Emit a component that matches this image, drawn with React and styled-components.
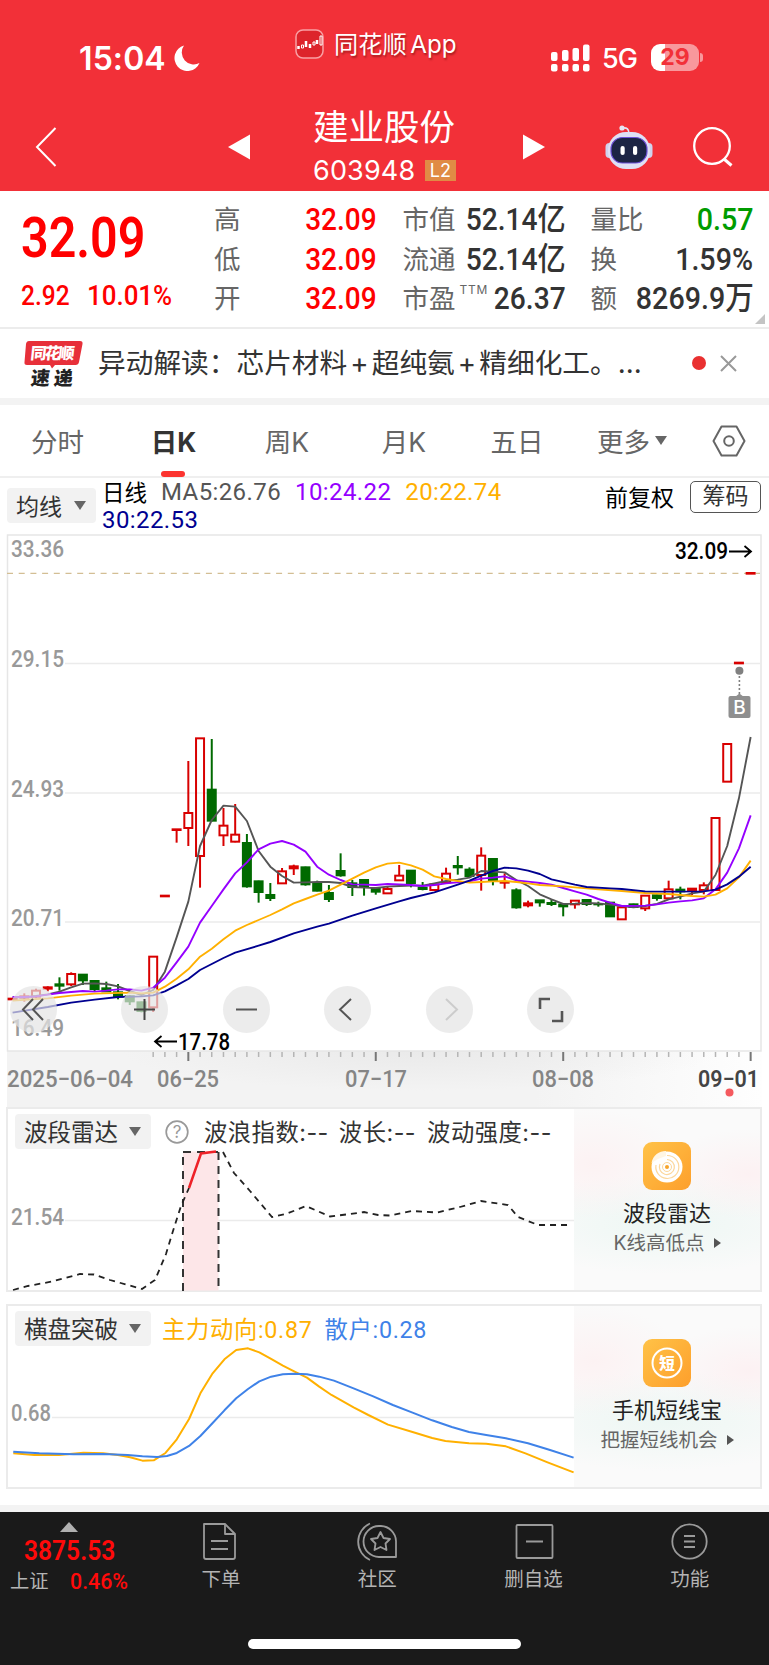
import styled, { createGlobalStyle } from 'styled-components';

const GlobalStyle = createGlobalStyle`
  * {
    box-sizing: border-box;
  }
  body {
    margin: 0;
    background: #ffffff;
    font-family: Inter, 'Noto Sans CJK SC', sans-serif;
    color: #333333;
  }
`;

const Page = styled.div`
  width: 769px;
  height: 1665px;
  overflow: hidden;
  display: flex;
  flex-direction: column;
`;

// Condensed figures used for every quote
const Num = styled.span`
  display: inline-block;
  font-family: Roboto, 'Noto Sans CJK SC', sans-serif;
  font-weight: ${(props) => props.$weight || 500};
  transform: scaleX(${(props) => props.$squeeze || 0.875});
  transform-origin: ${(props) => props.$origin || 'left'} center;
  white-space: nowrap;
`;

const Caret = styled.i`
  width: 0;
  height: 0;
  border: 6px solid transparent;
  border-bottom-width: 0;
  border-top: 9px solid #666666;
`;

/* ---------- header ---------- */

const Header = styled.header`
  height: 191px;
  background: #f23038;
  color: #ffffff;
`;

const StatusBar = styled.div`
  height: 92px;
  padding: 23px 70px 0 79px;
  display: grid;
  grid-template-columns: 216px 1fr auto;
`;

const Clock = styled.div`
  display: flex;
  align-items: center;
  height: 70px;
  gap: 8px;
  font-size: 32px;
  font-weight: 600;
  letter-spacing: 0.1px;
`;

const AppTag = styled.div`
  display: flex;
  align-items: center;
  gap: 10px;
  height: 41px;
  font-size: 24.2px;
  word-spacing: -3px;
  text-shadow: 1px 2px 2px rgba(80, 0, 0, 0.45);

  span {
    padding-bottom: 2px;
  }
`;

const Signals = styled.div`
  display: flex;
  align-items: center;
  height: 69px;
  font-size: 27px;
  font-weight: 500;
`;

const Network = styled.span`
  width: 37px;
  margin: 2px 12px 0 12px;
  letter-spacing: -1px;
`;

const Battery = styled.span`
  position: relative;
  width: 48px;
  height: 27px;
  border-radius: 9px;
  background: linear-gradient(90deg, #ffffff 30%, #f8989c 30%);
  color: #f23038;
  font-size: 23px;
  font-weight: 700;
  line-height: 27px;
  text-align: center;

  &::after {
    content: '';
    position: absolute;
    right: -4px;
    top: 9px;
    width: 3px;
    height: 9px;
    border-radius: 0 3px 3px 0;
    background: #f8989c;
  }
`;

const TitleBar = styled.div`
  height: 99px;
  padding: 10px 35px 0;
  display: flex;
  align-items: center;
`;

const BackIcon = styled.svg`
  margin-right: 171px;
`;

const StockName = styled.div`
  width: 143px;
  margin: 0 67px 0 63px;
  white-space: nowrap;
`;

const Name = styled.div`
  height: 46px;
  font-size: 35.5px;
  line-height: 48px;
`;

const Code = styled.div`
  display: flex;
  align-items: center;
  justify-content: space-between;
  height: 40px;
  padding-top: 1px;
  font-size: 27px;
  letter-spacing: 0.15px;
`;

const Badge = styled.span`
  width: 31px;
  height: 21px;
  background: #e08b45;
  font-size: 18px;
  line-height: 22px;
  text-align: center;
`;

const HeaderTools = styled.div`
  display: flex;
  align-items: center;
  gap: 40px;
  margin-left: 60px;
`;

/* ---------- quote ---------- */

const Quote = styled.section`
  position: relative;
  height: 138px;
  padding: 9px 15px 0 21px;
  display: grid;
  grid-template-columns: 193px 163px 163px 163px;
  border-bottom: 2px solid #ececec;

  &::after {
    content: '';
    position: absolute;
    right: 4px;
    bottom: 3px;
    border-left: 10px solid transparent;
    border-bottom: 10px solid #c4c4c4;
  }
`;

const PriceBlock = styled.div`
  color: #ff0000;
`;

const Price = styled.div`
  height: 72px;
  font-size: 55px;
  line-height: 74px;
`;

const Change = styled.div`
  display: flex;
  font-size: 28px;
  line-height: 48px;
  height: 48px;

  span:first-child {
    width: 66px;
  }
`;

const StatColumn = styled.div`
  margin-left: ${(props) => props.$shift || 0}px;
  width: 163px;
`;

const Stat = styled.div`
  display: flex;
  justify-content: space-between;
  height: 39.5px;
  line-height: 39.5px;
  font-size: 26.5px;
  color: #666666;
  white-space: nowrap;

  ${Num} {
    margin-left: -16px;
    font-size: 32px;
    color: ${(props) => props.$color || '#333333'};
  }

  sup {
    display: inline-block;
    width: 0;
    margin-left: 4px;
    font-size: 12px;
    line-height: 12px;
    letter-spacing: 0.8px;
    vertical-align: 14px;
  }
`;

/* ---------- news strip ---------- */

const News = styled.div`
  height: 69px;
  padding: 0 30px 0 24px;
  display: flex;
  align-items: center;
`;

const Headline = styled.div`
  width: 594px;
  margin-left: 15px;
  flex: none;
  font-size: 27.7px;
  line-height: 40px;
  white-space: nowrap;
  padding-bottom: 1px;

  b {
    display: inline-block;
    width: 24.5px;
    font-weight: 400;
    text-align: center;
  }
`;

const RedDot = styled.i`
  width: 14px;
  height: 14px;
  margin-right: 14px;
  margin-top: -1px;
  flex: none;
  border-radius: 50%;
  background: #e93030;
`;

const Band = styled.div`
  height: 7px;
  background: #f3f3f3;
`;

/* ---------- tabs ---------- */

const Tabs = styled.nav`
  height: 73px;
  display: flex;
  border-bottom: 2px solid #efefef;
`;

const Tab = styled.div`
  position: relative;
  width: ${(props) => props.$width}px;
  flex: none;
  display: flex;
  align-items: center;
  justify-content: center;
  gap: 5px;
  font-size: 26.5px;
  font-weight: ${(props) => (props.$active ? 700 : 400)};
  color: ${(props) => (props.$active ? '#333333' : '#666666')};
  white-space: nowrap;

  &::after {
    content: '';
    display: ${(props) => (props.$active ? 'block' : 'none')};
    position: absolute;
    bottom: -1px;
    left: calc(50% - 13px);
    width: 24px;
    height: 6px;
    border-radius: 3px;
    background: #fc3430;
  }
`;

/* ---------- indicators ---------- */

const Indicators = styled.div`
  height: 55px;
  padding: 1px 7px 0;
  display: flex;
  white-space: nowrap;
`;

const Picker = styled.div`
  width: ${(props) => props.$width}px;
  height: 35px;
  margin-top: ${(props) => props.$drop || 0}px;
  padding: 0 10px 1px 9px;
  display: flex;
  align-items: center;
  justify-content: space-between;
  flex: none;
  border-radius: 4px;
  background: #f2f2f2;
  font-size: ${(props) => props.$size || 23}px;
`;

const MaList = styled.div`
  width: 440px;
  margin-left: 6px;
  display: flex;
  flex-wrap: wrap;
  align-content: flex-start;
  column-gap: 14px;
  font-size: 22.5px;
  line-height: 27.5px;
  color: #000000;
`;

const Ma = styled.span`
  color: ${(props) => props.$color};
  font-family: Roboto, sans-serif;
  font-size: 24px;
  letter-spacing: 0.4px;
`;

const Adjust = styled.div`
  margin: 1px 16px 0 63px;
  font-size: 23px;
  line-height: 36px;
  color: #000000;
`;

const ChipsButton = styled.div`
  width: 71px;
  height: 32px;
  margin-top: 2px;
  border: 1.5px solid #555555;
  border-radius: 5px;
  font-size: 23px;
  line-height: 28px;
  text-align: center;
`;

/* ---------- charts ---------- */

const ChartArea = styled.div`
  position: relative;
  height: 574px;

  & > svg {
    display: block;
  }
`;

const Controls = styled.div`
  position: absolute;
  left: 10px;
  top: 453px;
  display: flex;
  gap: 54.6px;
`;

const RoundButton = styled.button`
  width: 47px;
  height: 47px;
  padding: 0;
  border: 0;
  border-radius: 50%;
  background: rgba(228, 228, 228, 0.7);

  &:first-child {
    margin-right: 9.5px;
  }
`;

const Panel = styled.section`
  position: relative;
  height: 185px;
  margin: 0 7px 12px 6px;
  border: 2px solid #ebebeb;
  display: grid;
  grid-template-columns: 566px 1fr;
`;

const PanelChart = styled.div`
  position: relative;

  svg.plot {
    display: block;
    overflow: visible;
  }
`;

const Legend = styled.div`
  position: absolute;
  left: 7px;
  top: 5px;
  display: flex;
  align-items: center;
  font-size: 23px;
  white-space: nowrap;
`;

const HelpIcon = styled.svg`
  margin-left: 13px;
`;

const LegendItem = styled.span`
  margin-left: ${(props) => props.$gap}px;
  margin-top: -1px;
  color: ${(props) => props.$color || '#333333'};
  font-family: ${(props) => (props.$figures ? 'Roboto' : 'Inter')}, 'Noto Sans CJK SC', sans-serif;
  font-size: 23.3px;
  letter-spacing: ${(props) => (props.$figures ? 0.7 : 0.5)}px;
`;

const Promo = styled.aside`
  display: flex;
  flex-direction: column;
  align-items: center;
  padding-top: 33px;
  background:
    radial-gradient(ellipse 90px 55px at 20px 55px, rgba(255, 234, 236, 0.5), transparent),
    radial-gradient(ellipse 90px 45px at 175px 65px, rgba(255, 232, 235, 0.5), transparent),
    radial-gradient(ellipse 170px 50px at 90px 115px, rgba(234, 246, 242, 0.8), transparent),
    #fafafa;
`;

const PromoName = styled.div`
  margin-top: 7px;
  font-size: 22px;
  line-height: 33px;
  color: #222222;
`;

const PromoHint = styled.div`
  display: flex;
  align-items: center;
  gap: 9px;
  font-size: 19.5px;
  line-height: 26px;
  color: #666666;

  &::after {
    content: '';
    border: 5.5px solid transparent;
    border-right-width: 0;
    border-left: 7px solid #555555;
  }
`;

/* ---------- bottom bar ---------- */

const Spacer = styled.div`
  height: 4px;
`;

const BottomBar = styled.footer`
  height: 153px;
  background: #1a1a1a;
  color: #b4b4b4;
`;

const NavRow = styled.div`
  height: 127px;
  display: grid;
  grid-template-columns: 143px repeat(4, 156.25px);
`;

const IndexCell = styled.div`
  padding: 10px 0 0 10px;
`;

const UpArrow = styled.i`
  display: block;
  margin-left: 50px;
  width: 0;
  height: 0;
  border: 9px solid transparent;
  border-top-width: 0;
  border-bottom: 10px solid #b0b0b0;
`;

const IndexValue = styled.div`
  margin-left: 14px;
  color: #ff0a0a;
  font-size: 27px;
  line-height: 38px;
`;

const IndexChange = styled.div`
  display: flex;
  font-size: 19.3px;
  line-height: 23px;
  gap: 21px;

  ${Num} {
    color: #ff0a0a;
    font-size: 22px;
  }
`;

const NavItem = styled.div`
  display: flex;
  flex-direction: column;
  align-items: center;
  padding-top: 9px;
  gap: 4px;
  font-size: 19.5px;
  line-height: 26px;
`;

const HomeBar = styled.div`
  width: 273px;
  height: 10px;
  margin-left: 248px;
  border-radius: 5px;
  background: #ffffff;
`;

// [open/close top, bottom, wick top, wick bottom, colour]; one unit is a third of a pixel
const candles = [
  [1316, 1318, 1316, 1318, 'r'], [1309, 1313, 1300, 1325, 'r'], [1292, 1310, 1286, 1315, 'r'],
  [1282, 1286, 1279, 1294, 'r'], [1273, 1277, 1252, 1292, 'g'], [1242, 1273, 1237, 1278, 'r'],
  [1244, 1261, 1244, 1275, 'g'], [1263, 1287, 1260, 1293, 'g'], [1285, 1294, 1265, 1296, 'g'],
  [1297, 1309, 1272, 1318, 'g'], [1309, 1324, 1306, 1335, 'g'], [1327, 1353, 1325, 1357, 'g'],
  [1190, 1342, 1190, 1356, 'r'], [1007, 1009, 1007, 1009, 'r'], [808, 810, 808, 848, 'r'],
  [759, 804, 603, 858, 'r'], [535, 888, 535, 983, 'r'], [689, 782, 537, 784, 'g'],
  [797, 826, 744, 858, 'r'], [824, 845, 732, 847, 'r'], [849, 979, 822, 983, 'g'],
  [964, 996, 962, 1028, 'g'], [1005, 1014, 969, 1023, 'g'], [934, 970, 924, 972, 'r'],
  [919, 925, 914, 945, 'r'], [922, 973, 920, 977, 'g'], [969, 992, 962, 994, 'g'],
  [999, 1017, 975, 1026, 'g'], [933, 946, 880, 950, 'g'], [970, 981, 960, 1008, 'g'],
  [960, 981, 958, 1007, 'g'], [984, 995, 983, 1004, 'g'], [987, 1000, 980, 1002, 'r'],
  [947, 961, 915, 963, 'r'], [932, 969, 930, 982, 'g'], [983, 987, 966, 991, 'g'],
  [973, 990, 970, 992, 'r'], [941, 967, 923, 969, 'r'], [918, 922, 888, 944, 'g'],
  [929, 948, 922, 950, 'g'], [887, 945, 862, 992, 'r'], [897, 961, 895, 976, 'g'],
  [966, 968, 940, 986, 'r'], [991, 1042, 985, 1046, 'g'], [1030, 1036, 1022, 1042, 'r'],
  [1021, 1027, 1020, 1040, 'g'], [1029, 1032, 1020, 1038, 'g'], [1034, 1039, 1032, 1069, 'g'],
  [1022, 1033, 1020, 1046, 'r'], [1020, 1032, 1017, 1038, 'g'], [1032, 1033, 1025, 1040, 'g'],
  [1028, 1069, 1026, 1071, 'g'], [1042, 1078, 1040, 1078, 'r'], [1033, 1041, 1031, 1043, 'g'],
  [1007, 1045, 1005, 1053, 'r'], [1006, 1014, 1004, 1022, 'g'], [988, 1015, 962, 1017, 'r'],
  [989, 994, 980, 1018, 'g'], [986, 992, 984, 1005, 'r'], [976, 990, 967, 1003, 'r'],
  [774, 990, 774, 990, 'r'], [552, 665, 552, 665, 'r'], [308, 310, 308, 310, 'r'],
  [39, 41, 39, 41, 'r'],
];

// moving averages as [bar, y]
const averages = [
  {
    color: '#555555',
    points: [[0, 1312], [1, 1312], [2, 1308], [3, 1303], [4, 1295], [5, 1282], [6, 1271], [7, 1270], [8, 1272],
      [9, 1279], [10, 1293], [11, 1305], [12, 1290], [13, 1235], [14, 1132], [15, 1025], [16, 858], [17, 780],
      [18, 737], [19, 740], [20, 783], [21, 873], [22, 920], [23, 948], [24, 968], [25, 967], [26, 966], [27, 966],
      [28, 969], [29, 981], [30, 983], [31, 984], [32, 980], [33, 978], [34, 977], [35, 977], [36, 970], [37, 963],
      [38, 959], [39, 953], [40, 933], [41, 935], [42, 937], [43, 960], [44, 978], [45, 1003], [46, 1018],
      [47, 1032], [48, 1031], [49, 1029], [50, 1030], [51, 1034], [52, 1038], [53, 1042], [54, 1038], [55, 1032],
      [56, 1018], [57, 1010], [58, 1000], [59, 995], [60, 945], [61, 858], [62, 715], [63, 531]],
  },
  {
    color: '#9500ff',
    points: [[0, 1311], [1, 1311], [2, 1309], [3, 1304], [4, 1299], [6, 1293], [7, 1295], [8, 1292], [9, 1288],
      [10, 1288], [11, 1292], [12, 1283], [13, 1253], [14, 1207], [15, 1160], [16, 1088], [17, 1038], [18, 988],
      [19, 940], [20, 907], [21, 868], [22, 851], [23, 843], [24, 854], [25, 875], [26, 920], [27, 944], [28, 960],
      [29, 973], [30, 974], [31, 975], [32, 972], [33, 973], [34, 975], [35, 978], [36, 975], [37, 970], [38, 967],
      [39, 964], [40, 956], [41, 953], [42, 949], [43, 961], [44, 965], [45, 969], [46, 974], [47, 984], [48, 994],
      [49, 1004], [50, 1017], [51, 1028], [52, 1038], [54, 1037], [55, 1033], [56, 1028], [57, 1024], [58, 1021],
      [59, 1015], [60, 988], [61, 938], [62, 865], [63, 766]],
  },
  {
    color: '#ffb000',
    points: [[0, 1322], [3, 1315], [5, 1307], [7, 1301], [10, 1298], [11, 1300], [12, 1298], [13, 1280], [14, 1256],
      [15, 1228], [16, 1190], [17, 1166], [18, 1138], [19, 1112], [20, 1095], [21, 1080], [22, 1065], [23, 1048],
      [24, 1030], [25, 1017], [26, 1004], [27, 992], [28, 974], [29, 956], [30, 938], [31, 922], [32, 911],
      [33, 908], [34, 916], [35, 929], [36, 949], [37, 957], [38, 963], [39, 968], [40, 966], [41, 964], [42, 963],
      [43, 966], [44, 970], [45, 975], [47, 979], [50, 988], [52, 993], [54, 999], [56, 1002], [58, 1008],
      [59, 1010], [60, 1004], [61, 985], [62, 952], [63, 902]],
  },
  {
    color: '#000090',
    points: [[0, 1358], [3, 1341], [5, 1328], [7, 1319], [9, 1311], [11, 1309], [12, 1306], [13, 1294], [14, 1276],
      [15, 1257], [16, 1230], [17, 1212], [18, 1194], [19, 1178], [21, 1157], [22, 1146], [24, 1120], [26, 1100],
      [27, 1091], [29, 1067], [31, 1045], [33, 1024], [34, 1014], [36, 997], [38, 974], [39, 962], [40, 947],
      [41, 933], [42, 923], [43, 925], [44, 932], [45, 942], [46, 958], [48, 974], [49, 981], [51, 985], [52, 987],
      [54, 994], [56, 995], [59, 994], [60, 989], [61, 973], [62, 950], [63, 920]],
  },
];

const stats = [
  {
    shift: 0,
    squeeze: 0.875,
    rows: [['高', '32.09', '#ff0000'], ['低', '32.09', '#ff0000'], ['开', '32.09', '#ff0000']],
  },
  {
    shift: 25.5,
    squeeze: 0.88,
    rows: [['市值', '52.14亿'], ['流通', '52.14亿'], ['市盈', '26.37', null, 'TTM']],
  },
  {
    shift: 50.5,
    squeeze: 0.895,
    rows: [['量比', '0.57', '#009c00'], ['换', '1.59%'], ['额', '8269.9万']],
  },
];

const barX = (i) => 12.6 + i * 11.715;
// candle units start 27px below the top of the svg
const barY = (v) => 27 + v / 3;

const Label = ({ x, y, width, size = 23, fill = '#999999', weight = 500, children }) => (
  <text
    x={x}
    y={y}
    fontFamily="Roboto, sans-serif"
    fontSize={size}
    fontWeight={weight}
    fill={fill}
    textLength={width}
    lengthAdjust="spacingAndGlyphs"
  >
    {children}
  </text>
);

const Candle = ({ index, data }) => {
  const [top, bottom, high, low, kind] = data;
  const color = kind === 'r' ? '#d80000' : '#006a00';
  const x = barX(index);
  return (
    <g stroke={color} strokeWidth="2" fill={kind === 'r' ? 'none' : color}>
      {high < top && <path d={`M${x} ${barY(high)}V${barY(top)}`} />}
      {low > bottom && <path d={`M${x} ${barY(bottom)}V${barY(low)}`} />}
      <rect x={x - 4} y={barY(top)} width="8" height={(bottom - top) / 3} />
    </g>
  );
};

const KLineChart = () => (
  <svg width="769" height="574">
    <defs>
      <linearGradient id="axisFade" x1="0" x2="1">
        <stop offset="0.7" stopColor="#f3f3f3" />
        <stop offset="1" stopColor="#fefefe" />
      </linearGradient>
      <radialGradient id="axisShade" cx="0.5" cy="0" r="0.5" gradientTransform="scale(1 2)">
        <stop offset="0" stopColor="#e6e6e6" />
        <stop offset="1" stopColor="#e6e6e6" stopOpacity="0" />
      </radialGradient>
    </defs>
    <rect x="7" y="518" width="755" height="56" fill="url(#axisFade)" />
    <rect x="120" y="518" width="600" height="40" fill="url(#axisShade)" opacity="0.7" />
    <path d="M7.5 518V2H761V518Z" fill="none" stroke="#e6e6e6" strokeWidth="1.5" />
    <path d="M65 130.5H760M65 260H760M65 389H760" stroke="#ebebeb" strokeWidth="1.5" />
    <path d="M7 40.3H760" stroke="#d3be94" strokeWidth="1.2" strokeDasharray="6 5.7" />
    <Label x="11" y="24" width="53">33.36</Label>
    <Label x="11" y="134" width="53">29.15</Label>
    <Label x="11" y="264" width="53">24.93</Label>
    <Label x="11" y="393" width="53">20.71</Label>
    <Label x="11" y="503" width="53">16.49</Label>
    {candles.map((data, index) => (
      <Candle key={index} index={index} data={data} />
    ))}
    {averages.map((line) => (
      <polyline
        key={line.color}
        points={line.points.map(([i, y]) => `${barX(i)},${barY(y)}`).join(' ')}
        fill="none"
        stroke={line.color}
        strokeWidth="1.9"
        strokeLinejoin="round"
      />
    ))}
    <Label x="675" y="26" width="53" fill="#000000">32.09</Label>
    <path d="M729 18.5H751M744.5 13L751 18.5L744.5 24" fill="none" stroke="#000000" strokeWidth="1.8" />
    <path d="M177 508.5H155M161.5 503L155 508.5L161.5 514" fill="none" stroke="#000000" strokeWidth="1.8" />
    <Label x="178" y="516.5" width="52" fill="#000000">17.78</Label>

    {/* buy marker */}
    <circle cx="739.4" cy="137.7" r="4" fill="#808080" />
    <path d="M739.4 143V162" stroke="#808080" strokeWidth="1.6" strokeDasharray="2 2" />
    <path d="M735 164L739.4 160.5L744 164Z" fill="#8f8f8f" />
    <rect x="728.5" y="163" width="22" height="22" rx="2" fill="#8f8f8f" />
    <text x="739.5" y="181" textAnchor="middle" fontFamily="Inter, sans-serif" fontSize="19" fontWeight="500" fill="#ffffff">B</text>

    {/* time axis */}
    {candles.map((data, i) => {
      const major = (i - 15) % 16 === 0;
      return i > 11 && (
        <path
          key={i}
          d={`M${barX(i)} 519V${major ? 528 : 524}`}
          stroke={major ? '#777777' : '#b5b5b5'}
          strokeWidth={major ? 2 : 1.5}
        />
      );
    })}
    <Label x="7" y="554" width="126" fill="#858585">2025−06−04</Label>
    <Label x="157" y="554" width="62" fill="#858585">06−25</Label>
    <Label x="345" y="554" width="62" fill="#858585">07−17</Label>
    <Label x="532" y="554" width="62" fill="#858585">08−08</Label>
    <Label x="698" y="554" width="61" fill="#444444" weight="600">09−01</Label>
    <circle cx="729.5" cy="559.5" r="4" fill="#f55a5f" />
  </svg>
);

const controlIcons = [
  { d: 'M23 13L13 23.5L23 34M33 13L23 23.5L33 34', color: '#555555' },
  { d: 'M13 23.5H34M23.5 13V34', color: '#444444' },
  { d: 'M13 23.5H34', color: '#555555' },
  { d: 'M27 13L16 23.5L27 34', color: '#555555' },
  { d: 'M20 13L31 23.5L20 34', color: '#cccccc' },
  { d: 'M13 23V13H23M35 25V35H25', color: '#555555', width: 2.6 },
];

const RadarIcon = () => (
  <svg width="48" height="48">
    <rect width="48" height="48" rx="9" fill="url(#promoFill)" />
    <circle cx="24" cy="25" r="15.5" fill="#ffffff" />
    <path d="M8.5 21C10 13 16 9 23 9V14L15 17Z" fill="#fff6e4" />
    <path d="M24 17.5A7.5 7.5 0 1 1 17 22M24 13.5A11.5 11.5 0 1 1 13 23" fill="none" stroke="#fcd79c" strokeWidth="1.2" />
    <circle cx="24" cy="25" r="4.5" fill="none" stroke="#fcd79c" strokeWidth="1" />
    <circle cx="24" cy="25" r="2" fill="#f6a52c" />
  </svg>
);

const ShortIcon = () => (
  <svg width="48" height="48">
    <rect width="48" height="48" rx="9" fill="url(#promoFill)" />
    <circle cx="24" cy="24" r="14.5" fill="none" stroke="#ffffff" strokeWidth="2" />
    <text x="24" y="29.5" textAnchor="middle" fontFamily="'Noto Sans CJK SC', sans-serif" fontSize="15.5" fontWeight="900" fill="#ffffff">短</text>
  </svg>
);

const Robot = () => (
  <svg width="48" height="46" viewBox="0 0 48 46">
    <path d="M24 10C24 5 22 3.5 17.5 4" fill="none" stroke="#e6e4f4" strokeWidth="1.7" />
    <circle cx="17" cy="4" r="2.6" fill="#e6e4f4" />
    <rect x="0.5" y="19" width="8" height="15" rx="4" fill="#d0d3ee" />
    <rect x="39.5" y="19" width="8" height="15" rx="4" fill="#d0d3ee" />
    <rect x="3" y="8" width="42" height="37" rx="18" fill="#dfe0f4" />
    <rect x="6" y="13.5" width="36" height="25.5" rx="11.5" fill="#1c2444" stroke="#6d50d8" strokeWidth="1.2" />
    <rect x="15.5" y="22" width="4.2" height="9" rx="2.1" fill="#ffffff" />
    <rect x="28" y="22" width="4.2" height="9" rx="2.1" fill="#ffffff" />
  </svg>
);

const navItems = [
  {
    label: '下单',
    icon: (
      <>
        <path d="M3 3H24L34 13V36Q34 38 32 38H5Q3 38 3 36Z" />
        <path d="M24 3V13H34M10 20H27M10 28H27" />
      </>
    ),
  },
  {
    label: '社区',
    icon: (
      <>
        <path d="M22 5H24A15.5 15.5 0 0 1 39 20V36H22A15.5 15.5 0 0 1 22 5Z" />
        <path d="M13 2.5A20 20 0 0 0 13 39" />
        <path d="M23.5 11L26.5 17L33 18L28.5 22.5L29.5 29L23.5 26L17.5 29L18.5 22.5L14 18L20.5 17Z" />
      </>
    ),
  },
  { label: '删自选', icon: <path d="M4.5 4H38.5Q39.5 4 39.5 5V36Q39.5 37 38.5 37H4.5Q3.5 37 3.5 36V5Q3.5 4 4.5 4ZM13 20.5H30" /> },
  {
    label: '功能',
    icon: (
      <>
        <circle cx="20.5" cy="20.5" r="17.2" />
        <path d="M15 15H26M15 20.5H26M15 26H26" />
      </>
    ),
  },
];

const PROFIT_LINE = 'M27 475L70 480L120 480L170 473L210 475L240 480L265 487L290 497L313 496L337 474L360 433L385 372L408 295L433 235L457 193L481 165L505 160L528 172L552 192L576 212L600 230L625 248L650 275L675 300L720 337L750 360L790 389L840 411L880 429L907 438L955 445L990 446L1030 454L1070 475L1115 502L1168 532';
const RETAIL_LINE = 'M27 470L80 475L150 478L210 477L260 480L290 484L320 486L340 483L360 474L385 453L408 423L433 384L457 346L481 310L505 282L528 259L552 245L576 238L600 236L625 238L650 245L680 257L720 280L760 304L800 330L840 353L880 376L920 396L955 411L990 420L1030 430L1075 445L1120 465L1168 488';

const App = () => (
  <Page>
    <GlobalStyle />
    <Header>
      <StatusBar>
        <Clock>
          15:04
          <svg width="26" height="26" viewBox="0 0 26 26">
            <path d="M10 0.5A13 13 0 1 0 25.5 18A12 12 0 0 1 10 0.5Z" fill="#ffffff" />
          </svg>
        </Clock>
        <AppTag>
          <svg width="29" height="30">
            <rect x="1" y="1" width="27" height="28" rx="7" fill="#dd242b" stroke="#f9a0a4" strokeWidth="1.5" />
            <path d="M3.5 17V20M11 12V18M15 15V19M22 11V15" stroke="#ffffff" strokeWidth="2.5" />
            <path d="M6.5 16h2v3h-2zM18 13h2v3h-2zM25 7h2v9h-2z" fill="none" stroke="#ffffff" />
          </svg>
          <span>同花顺 App</span>
        </AppTag>
        <Signals>
          <svg width="39" height="28">
            <g fill="#ffffff">
              <rect x="0" y="8" width="6.5" height="9" rx="2" />
              <rect x="11" y="6" width="6.5" height="11" rx="2" />
              <rect x="21.5" y="4" width="6.5" height="13" rx="2" />
              <rect x="32" y="0.5" width="6.5" height="16.5" rx="2" />
              <rect x="0" y="20" width="6.5" height="7.5" rx="2" />
              <rect x="11" y="20" width="6.5" height="7.5" rx="2" />
              <rect x="21.5" y="20" width="6.5" height="7.5" rx="2" />
              <rect x="32" y="20" width="6.5" height="7.5" rx="2" />
            </g>
          </svg>
          <Network>5G</Network>
          <Battery>29</Battery>
        </Signals>
      </StatusBar>
      <TitleBar>
        <BackIcon width="22" height="40">
          <path d="M20.5 1L2 20L20.5 39" fill="none" stroke="#ffffff" strokeWidth="2" />
        </BackIcon>
        <svg width="22" height="26">
          <path d="M0 13L22 0.5V25.5Z" fill="#ffffff" />
        </svg>
        <StockName>
          <Name>建业股份</Name>
          <Code>
            603948
            <Badge>L2</Badge>
          </Code>
        </StockName>
        <svg width="22" height="26">
          <path d="M22 13L0 0.5V25.5Z" fill="#ffffff" />
        </svg>
        <HeaderTools>
          <Robot />
          <svg width="40" height="40">
            <circle cx="19" cy="19" r="17.8" fill="none" stroke="#ffffff" strokeWidth="2.3" />
            <path d="M31 32L38.5 38.5" stroke="#ffffff" strokeWidth="3" />
          </svg>
        </HeaderTools>
      </TitleBar>
    </Header>

    <Quote>
      <PriceBlock>
        <Price><Num $squeeze={0.88} $weight={600}>32.09</Num></Price>
        <Change>
          <Num>2.92</Num>
          <Num $squeeze={0.925}>10.01%</Num>
        </Change>
      </PriceBlock>
      {stats.map((column) => (
        <StatColumn key={column.shift} $shift={column.shift}>
          {column.rows.map(([label, value, color, note]) => (
            <Stat key={label} $color={color}>
              <span>{label}{note && <sup>{note}</sup>}</span>
              <Num $origin="right" $squeeze={column.squeeze}>{value}</Num>
            </Stat>
          ))}
        </StatColumn>
      ))}
    </Quote>

    <News>
      <svg width="59" height="60" viewBox="0 -6 59 60">
        <path d="M5 1H56Q59 1 58.5 4L55 22Q54.5 25 51.5 25H31L28 28.5L26 25H3Q0 25 0.5 22L2 4Q2.5 1 5 1Z" fill="#e7303a" />
        <g fontFamily="'Noto Sans CJK SC', sans-serif" fontWeight="900" transform="skewX(-6)">
          <text x="8" y="19" fontSize="16" fill="#ffffff" textLength="44">同花顺</text>
          <text x="11" y="45" fontSize="19" fill="#222222" textLength="42">速递</text>
        </g>
      </svg>
      <Headline>异动解读：芯片材料<b>+</b>超纯氨<b>+</b>精细化工。...</Headline>
      <RedDot />
      <svg width="17" height="17">
        <path d="M1 1L16 16M16 1L1 16" stroke="#999999" strokeWidth="2" />
      </svg>
    </News>
    <Band />

    <Tabs>
      <Tab $width={115}>分时</Tab>
      <Tab $width={117} $active>日K</Tab>
      <Tab $width={110}>周K</Tab>
      <Tab $width={124}>月K</Tab>
      <Tab $width={102}>五日</Tab>
      <Tab $width={128}>更多<Caret /></Tab>
      <Tab $width={66}>
        <svg width="34" height="32">
          <path d="M9.5 1.5H24.5L32.5 16L24.5 30.5H9.5L1.5 16Z" fill="none" stroke="#666666" strokeWidth="2" strokeLinejoin="round" />
          <circle cx="17" cy="16" r="4.8" fill="none" stroke="#666666" strokeWidth="2" />
        </svg>
      </Tab>
    </Tabs>

    <Indicators>
      <Picker $width={89} $drop={9}>均线<Caret /></Picker>
      <MaList>
        <span>日线</span>
        <Ma $color="#555555">MA5:26.76</Ma>
        <Ma $color="#9500ff">10:24.22</Ma>
        <Ma $color="#ffb000">20:22.74</Ma>
        <Ma $color="#000090">30:22.53</Ma>
      </MaList>
      <Adjust>前复权</Adjust>
      <ChipsButton>筹码</ChipsButton>
    </Indicators>

    <ChartArea>
      <KLineChart />
      <Controls>
        {controlIcons.map((icon) => (
          <RoundButton key={icon.d}>
            <svg width="47" height="47">
              <path d={icon.d} fill="none" stroke={icon.color} strokeWidth={icon.width || 2} />
            </svg>
          </RoundButton>
        ))}
      </Controls>
    </ChartArea>

    <Panel>
      <PanelChart>
        <svg className="plot" width="566" height="181" viewBox="8 1109 566 181">
          <defs>
            <linearGradient id="promoFill" x1="0" y1="0" x2="1" y2="1">
              <stop offset="0" stopColor="#ffc247" />
              <stop offset="1" stopColor="#fd9f2c" />
            </linearGradient>
          </defs>
          <path d="M65 1220.5H574" stroke="#ebebeb" strokeWidth="1.5" />
          <rect x="183" y="1151.5" width="35.5" height="139" fill="#fde6e8" />
          <path d="M183 1291V1152M218.5 1152V1291M183 1152H218" fill="none" stroke="#333333" strokeWidth="2" strokeDasharray="8 6" />
          <path
            d="M13 1290L28 1286L52 1281.5L80 1274L94 1274.5L110 1280L142 1289L155 1280L166 1254L173 1231L181 1206L189 1188"
            fill="none" stroke="#222222" strokeWidth="1.8" strokeDasharray="6 5"
          />
          <path
            d="M223 1152L234 1173L250 1191L272 1217L286 1214L306 1206L330 1216.5L350 1214L364 1212L378 1215L390 1215.5L412 1211L437 1212.5L460 1207L481 1201L508 1205L518 1217L538 1225H572"
            fill="none" stroke="#222222" strokeWidth="1.8" strokeDasharray="6 5"
          />
          <path d="M189 1188L201 1153.5L216 1151.5" fill="none" stroke="#ee2228" strokeWidth="2.5" />
          <Label x="11" y="1225" width="53">21.54</Label>
        </svg>
        <Legend>
          <Picker $width={136} $size={23.5}>波段雷达<Caret /></Picker>
          <HelpIcon width="26" height="26">
            <circle cx="13" cy="13" r="10.8" fill="none" stroke="#999999" strokeWidth="1.7" />
            <text x="13" y="19" textAnchor="middle" fontFamily="Inter, sans-serif" fontSize="17" fill="#999999">?</text>
          </HelpIcon>
          <LegendItem $gap={14}>波浪指数:--</LegendItem>
          <LegendItem $gap={10}>波长:--</LegendItem>
          <LegendItem $gap={11}>波动强度:--</LegendItem>
        </Legend>
      </PanelChart>
      <Promo>
        <RadarIcon />
        <PromoName>波段雷达</PromoName>
        <PromoHint>K线高低点</PromoHint>
      </Promo>
    </Panel>

    <Panel>
      <PanelChart>
        <svg className="plot" width="566" height="181" viewBox="8 1306 566 181">
          <path d="M52 1417.5H574" stroke="#ebebeb" strokeWidth="1.5" />
          <g transform="translate(0 1295) scale(0.4911 0.3333)" fill="none" strokeWidth="2" strokeLinejoin="round">
            <path d={PROFIT_LINE} stroke="#ffb000" vectorEffect="non-scaling-stroke" />
            <path d={RETAIL_LINE} stroke="#3f82e8" vectorEffect="non-scaling-stroke" />
          </g>
          <Label x="11" y="1421" width="40">0.68</Label>
        </svg>
        <Legend>
          <Picker $width={136} $size={23.5}>横盘突破<Caret /></Picker>
          <LegendItem $gap={11} $color="#ffb000" $figures>主力动向:0.87</LegendItem>
          <LegendItem $gap={12} $color="#3f82e8" $figures>散户:0.28</LegendItem>
        </Legend>
      </PanelChart>
      <Promo>
        <ShortIcon />
        <PromoName>手机短线宝</PromoName>
        <PromoHint>把握短线机会</PromoHint>
      </Promo>
    </Panel>

    <Spacer />
    <Band />
    <BottomBar>
      <NavRow>
        <IndexCell>
          <UpArrow />
          <IndexValue><Num $squeeze={0.91} $weight={600}>3875.53</Num></IndexValue>
          <IndexChange>
            上证
            <Num $squeeze={0.97}>0.46%</Num>
          </IndexChange>
        </IndexCell>
        {navItems.map((item) => (
          <NavItem key={item.label}>
            <svg width="41" height="41" fill="none" stroke="#9a9a9a" strokeWidth="1.8" strokeLinejoin="round">
              {item.icon}
            </svg>
            {item.label}
          </NavItem>
        ))}
      </NavRow>
      <HomeBar />
    </BottomBar>
  </Page>
);

export default App;
